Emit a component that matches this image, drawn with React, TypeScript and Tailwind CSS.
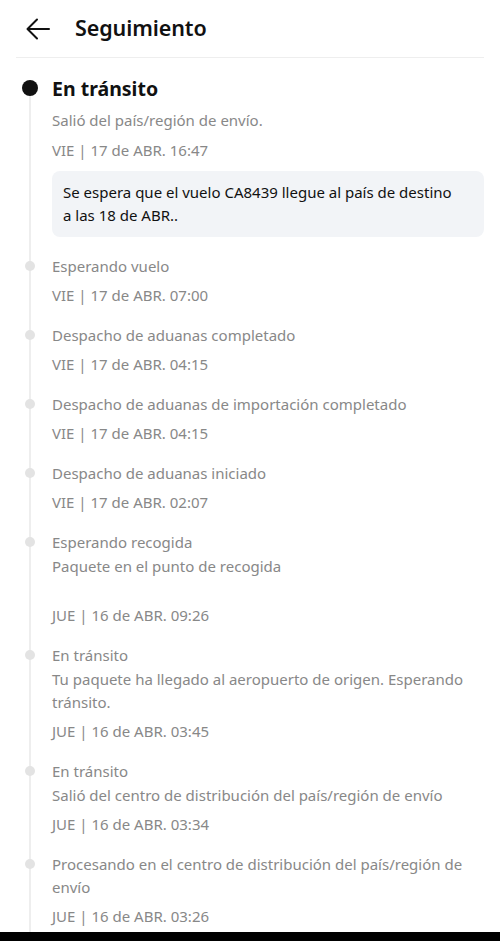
import React from "react";

type Ev = { lines: string[]; date: string; gap?: boolean };

const events: Ev[] = [
  { lines: ["Esperando vuelo"], date: "VIE | 17 de ABR. 07:00" },
  { lines: ["Despacho de aduanas completado"], date: "VIE | 17 de ABR. 04:15" },
  { lines: ["Despacho de aduanas de importación completado"], date: "VIE | 17 de ABR. 04:15" },
  { lines: ["Despacho de aduanas iniciado"], date: "VIE | 17 de ABR. 02:07" },
  { lines: ["Esperando recogida", "Paquete en el punto de recogida"], date: "JUE | 16 de ABR. 09:26", gap: true },
  { lines: ["En tránsito", "Tu paquete ha llegado al aeropuerto de origen. Esperando tránsito."], date: "JUE | 16 de ABR. 03:45" },
  { lines: ["En tránsito", "Salió del centro de distribución del país/región de envío"], date: "JUE | 16 de ABR. 03:34" },
  { lines: ["Procesando en el centro de distribución del país/región de envío"], date: "JUE | 16 de ABR. 03:26" },
];

export default function App() {
  return (
    <div
      className="w-[500px] h-[941px] bg-white overflow-hidden flex flex-col relative"
      style={{ fontFamily: '"Noto Sans", "Liberation Sans", sans-serif' }}
    >
      <div className="h-[57px] flex items-center px-[24px] shrink-0">
        <svg width="28" height="28" viewBox="0 0 28 28" fill="none" stroke="#111" strokeWidth="2" strokeLinecap="round" strokeLinejoin="round">
          <path d="M25 14H4" />
          <path d="M13 4.5L3.5 14L13 23.5" />
        </svg>
        <div className="ml-[23px] text-[21.5px] font-semibold text-[#111] tracking-[-0.1px]">Seguimiento</div>
      </div>
      <div className="mx-[16px] h-px bg-[#eeeeee] shrink-0" />

      <div className="relative flex-1 pl-[52px] pr-[16px]">
        <div className="absolute left-[29px] top-[30px] bottom-0 w-[2px] bg-[#eeeeee]" />
        <div className="relative pt-[17px]">
          <div className="absolute left-[-30px] top-[22px] w-[16px] h-[16px] rounded-full bg-[#111]" />
          <div className="text-[19.5px] font-bold text-[#111] leading-[28px]">En tránsito</div>
          <div className="mt-[6px] text-[15px] text-[#888] leading-[22px]">Salió del país/región de envío.</div>
          <div className="mt-[8px] text-[15px] text-[#888] leading-[22px]">VIE | 17 de ABR. 16:47</div>
          <div className="mt-[10px] bg-[#f2f4f7] rounded-[8px] pl-[11px] pr-[26px] py-[10px] text-[15px] text-[#111] leading-[23px]">
            Se espera que el vuelo CA8439 llegue al país de destino a las 18 de ABR..
          </div>
        </div>

        <div className="flex flex-col">
          {events.map((e, i) => (
            <div key={i} className="relative pt-[18px]">
              <div className="absolute left-[-27px] top-[24px] w-[10px] h-[10px] rounded-full bg-[#e3e3e3]" />
              {e.lines.map((l, j) => (
                <div key={j} className="text-[15px] text-[#888] leading-[23.5px]">
                  {l}
                </div>
              ))}
              <div className={(e.gap ? "mt-[26px]" : "mt-[5.5px]") + " text-[15px] text-[#888] leading-[22px]"}>{e.date}</div>
            </div>
          ))}
        </div>
      </div>
      <div className="absolute left-0 right-0 bottom-0 h-[9px] bg-black" />
    </div>
  );
}
